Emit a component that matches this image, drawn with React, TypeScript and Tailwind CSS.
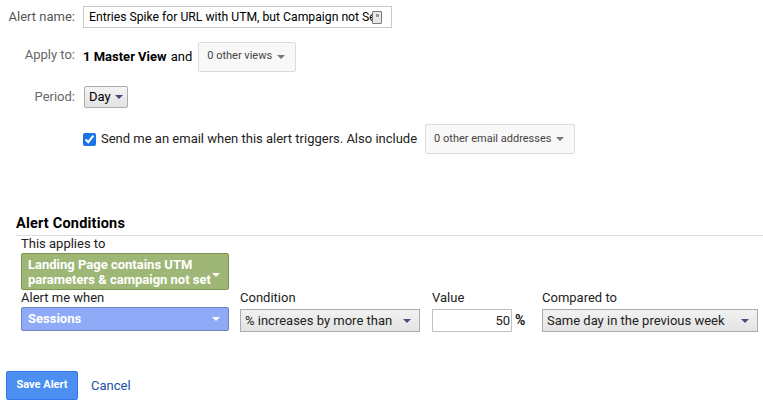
import React, { useState } from 'react';

const font = { fontFamily: 'Roboto, "Liberation Sans", Arial, sans-serif' };

const Caret = ({ className = '' }: { className?: string }) => (
  <svg width="8" height="4" viewBox="0 0 8 4" className={className}>
    <path d="M0 0 L8 0 L4 4 Z" fill="currentColor" />
  </svg>
);

// Grey drop-down button, used for views and email addresses
const MenuButton = ({ label, width }: { label: string; width: string }) => (
  <button
    className={`flex items-center justify-between h-[30px] ${width} pl-[8px] pr-[10px] rounded-[2px] border border-[#dcdcdc] bg-[#f8f8f8] text-[11px] text-[#444]`}
  >
    <span>{label}</span>
    <Caret className="text-[#777]" />
  </button>
);

// Classic select box of the conditions row
const SelectBox = ({ label, width }: { label: string; width: string }) => (
  <div
    className={`flex items-center justify-between h-[23px] ${width} pl-[4px] pr-[8px] border border-[#acacac] bg-gradient-to-b from-[#f2f2f2] to-[#e3e3e3] text-[13px] text-[#222]`}
  >
    <span>{label}</span>
    <Caret className="text-[#44507a]" />
  </div>
);

export default function App() {
  const [name, setName] = useState('Entries Spike for URL with UTM, but Campaign not Set');
  const [sendEmail, setSendEmail] = useState(true);

  return (
    <div className="w-[763px] h-[404px] bg-white text-[13px] text-[#222] overflow-hidden" style={font}>
      {/* Alert settings */}
      <div className="pt-[6px] flex flex-col">
        <div className="flex items-center h-[22px]">
          <label className="w-[75px] text-right text-[#555]">Alert name:</label>
          <div className="ml-[8px] relative w-[309px] h-[22px] border border-[#c9c9c9] flex items-center pl-[5px] pr-[8px]">
            <input
              value={name}
              onChange={(e) => setName(e.target.value)}
              className="w-full bg-transparent outline-none text-[12.2px] text-black"
            />
            <span className="absolute right-[9px] top-[4px] w-[10px] h-[13px] border border-[#777] bg-[#e8e8e8] rounded-[1px]">
              <span className="absolute left-[3px] top-[2px] w-[3px] h-[3px] bg-[#999]" />
            </span>
          </div>
        </div>

        <div className="flex items-start mt-[13px] h-[30px]">
          <label className="w-[75px] text-right text-[#666] pt-[4px]">Apply to:</label>
          <div className="ml-[8px] flex items-center h-[30px] pt-[1px]">
            <span className="font-bold text-black">1 Master View</span>
            <span className="ml-[4px] mr-[6px] text-black">and</span>
            <MenuButton label="0 other views" width="w-[98px]" />
          </div>
        </div>

        <div className="flex items-center mt-[15px] h-[22px]">
          <label className="w-[75px] text-right text-[#666]">Period:</label>
          <button className="ml-[9px] flex items-center gap-[4px] h-[22px] px-[4px] border border-[#acacac] rounded-[2px] bg-gradient-to-b from-[#f4f4f4] to-[#e2e2e2] text-[13px] text-black">
            Day
            <Caret className="text-[#3c4a73]" />
          </button>
        </div>

        <div className="flex items-center mt-[16px] h-[30px] ml-[83px]">
          <input
            type="checkbox"
            checked={sendEmail}
            onChange={(e) => setSendEmail(e.target.checked)}
            className="w-[13px] h-[13px] accent-[#1a73e8] m-0"
          />
          <span className="ml-[5px] mr-[8px] text-[#222]">
            Send me an email when this alert triggers. Also include
          </span>
          <MenuButton label="0 other email addresses" width="w-[150px]" />
        </div>
      </div>

      {/* Alert conditions */}
      <div className="mt-[60px] ml-[16px]">
        <h2 className="text-[14.5px] font-bold text-black leading-[20px] tracking-[0.2px]">Alert Conditions</h2>
        <div className="mt-[1px] border-t border-[#ddd]" />
        <div className="ml-[5px]">
          <div className="leading-[15px]">This applies to</div>
          <div className="mt-[2px] w-[208px] h-[37px] rounded-[2px] border border-[#7c9350] bg-[#9eb776] flex items-center justify-between pl-[6px] pr-[8px]">
            <span className="text-[13px] leading-[15px] font-bold text-white">
              Landing Page contains UTM
              <br />
              parameters &amp; campaign not set
            </span>
            <Caret className="text-white mt-[6px]" />
          </div>

          <div className="flex">
            <div className="w-[219px]">
              <div className="leading-[15px]">Alert me when</div>
              <div className="mt-[2px] w-[208px] h-[24px] rounded-[2px] border border-[#6f83bd] bg-[#8faaf6] flex items-center justify-between pl-[6px] pr-[8px]">
                <span className="text-[13px] font-bold text-white">Sessions</span>
                <Caret className="text-white" />
              </div>
            </div>
            <div className="w-[192px]">
              <div className="leading-[15px]">Condition</div>
              <div className="mt-[4px]">
                <SelectBox label="% increases by more than" width="w-[180px]" />
              </div>
            </div>
            <div className="w-[110px]">
              <div className="leading-[15px]">Value</div>
              <div className="mt-[4px] flex items-center">
                <input
                  defaultValue="50"
                  className="w-[80px] h-[23px] border border-[#c0c0c0] text-right pr-[1px] text-[13px] outline-none"
                />
                <span className="ml-[3px] font-bold text-[14px]">%</span>
              </div>
            </div>
            <div>
              <div className="leading-[15px]">Compared to</div>
              <div className="mt-[4px]">
                <SelectBox label="Same day in the previous week" width="w-[216px]" />
              </div>
            </div>
          </div>
        </div>
      </div>

      {/* Actions */}
      <div className="mt-[39px] ml-[6px] flex items-center">
        <button className="h-[29px] w-[72px] rounded-[2px] border border-[#3079ed] bg-[#4d8ff0] text-white text-[11px] font-bold">
          Save Alert
        </button>
        <button className="ml-[13px] text-[13px] text-[#1a4fa8]">Cancel</button>
      </div>
    </div>
  );
}
